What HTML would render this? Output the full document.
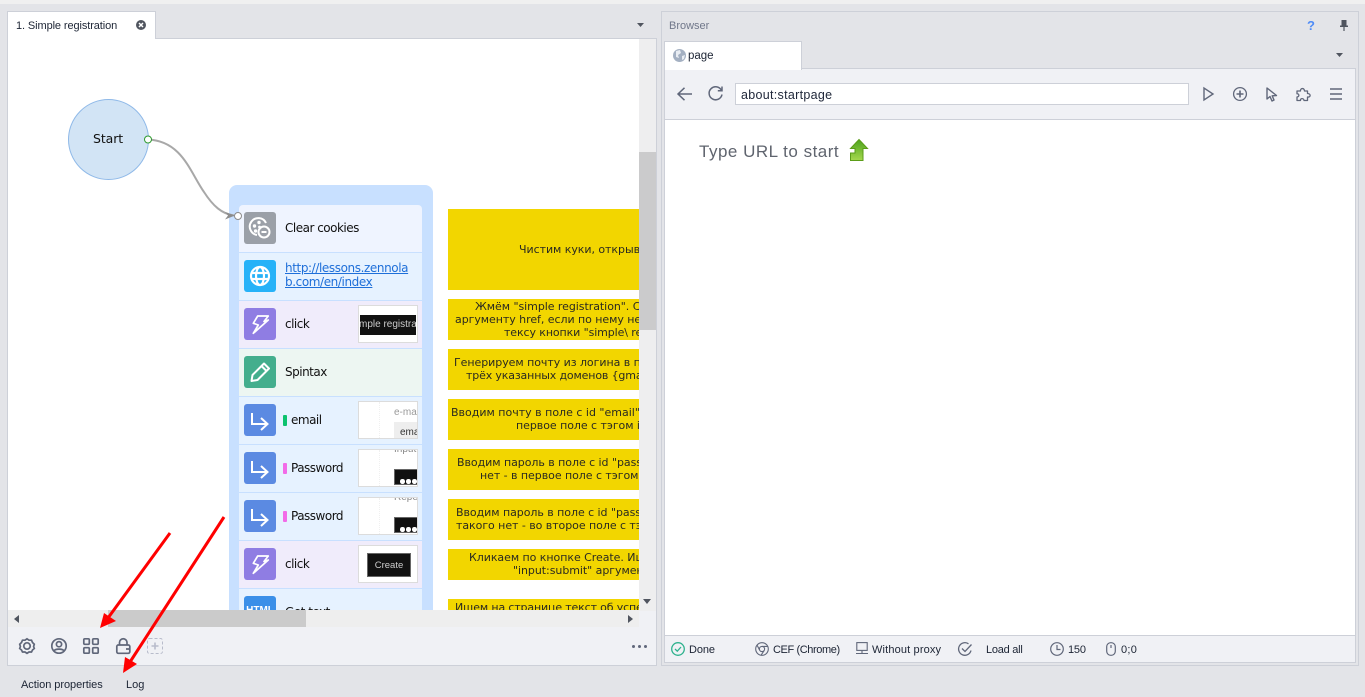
<!DOCTYPE html>
<html><head><meta charset="utf-8"><style>
html,body{margin:0;padding:0;width:1365px;height:697px;overflow:hidden;background:#e3e4e8}
body{position:relative;font-family:"Liberation Sans",sans-serif;font-size:11px;color:#1c2434}
.a,.t,.n{position:absolute}
.t{white-space:nowrap;line-height:14px}
.row{position:absolute;left:231px;width:183px;height:47px}
.ic{position:absolute;left:5px;top:7px;width:32px;height:32px;border-radius:3px}
.ic svg{display:block}
.rt{position:absolute;left:46px;top:15px;font-family:"DejaVu Sans",sans-serif;font-size:12px;line-height:16px;white-space:nowrap;color:#111;letter-spacing:-.5px}
.bar{position:absolute;left:44px;top:18px;width:4px;height:11px;border-radius:1px}
.th{position:absolute;left:119px;top:4px;width:58px;height:36px;border:1px solid #dcdcdc;background:#fff;overflow:hidden}
.dl{position:absolute;left:20px;top:0;height:36px;border-left:1px dotted #f0f0f0}
.n{left:440px;width:200px;background:#f2d600}
.nt{position:absolute;white-space:nowrap;font-family:"DejaVu Sans",sans-serif;font-size:11px;line-height:13px;color:#2a2a20;letter-spacing:-.05px}
svg{position:absolute;overflow:visible}
</style></head><body>
<div class="a" style="left:0;top:0;width:1365px;height:4px;background:#f0f0f0"></div>

<!-- left panel -->
<div class="a" style="left:7px;top:38px;width:650px;height:628px;background:#f0f1f5;border:1px solid #cdd0d8;box-sizing:border-box"></div>
<div class="a" style="left:7px;top:11px;width:149px;height:29px;background:#fff;border:1px solid #cdd0d8;border-bottom:0;box-sizing:border-box"></div>
<div class="t" style="left:16px;top:19px;font-size:11px;letter-spacing:-.1px">1. Simple registration</div>
<svg style="left:136px;top:20px" width="10" height="10"><circle cx="5" cy="5" r="5" fill="#50555f"/><path d="M3 3L7 7M7 3L3 7" stroke="#fff" stroke-width="1.5"/></svg>
<svg style="left:637px;top:23px" width="7" height="4"><path d="M0 0H7L3.5 4Z" fill="#50555f"/></svg>

<!-- canvas -->
<div class="a" style="left:8px;top:39px;width:631px;height:572px;background:#fff;overflow:hidden">
 <div style="position:absolute;left:-8px;top:-39px;width:700px;height:700px">
  <div class="a" style="left:229px;top:185px;width:204px;height:480px;background:#c8e0ff;border-radius:8px"></div>

  <svg style="left:0;top:0" width="300" height="300">
   <circle cx="108.500" cy="139.500" r="40" fill="#d2e4f5" stroke="#8fb9e8" stroke-width="1"/>
   <path d="M148 139.500C182 141 190 172 204 192C213 206 222 214 234 215.500" fill="none" stroke="#a8a8a8" stroke-width="2"/>
  </svg>
  <div class="t" style="left:93px;top:132px;font-family:'DejaVu Sans',sans-serif;font-size:12.500px;color:#111;letter-spacing:-.1px">Start</div>

  <div class="row" style="left:239px;top:205px;background:#eff4ff;border-radius:4px 4px 0 0">
   <div class="ic" style="background:#9ba0a8"><svg width="32" height="32" fill="none" stroke="#fff" stroke-width="2"><path d="M22 11A8.500 8.500 0 1 0 13 23"/><circle cx="20" cy="20" r="5.500"/><path d="M17.500 20H22.500"/><g fill="#fff" stroke="none"><circle cx="10.500" cy="14" r="1.700"/><circle cx="15" cy="10.500" r="1.700"/><circle cx="11.500" cy="19" r="1.700"/><circle cx="15.500" cy="15" r="1.400"/></g></svg></div>
   <div class="rt">Clear cookies</div>
  </div>
  <div class="row" style="left:239px;top:253px;background:#e6f2ff">
   <div class="ic" style="background:#26b2f8"><svg width="32" height="32" fill="none" stroke="#fff" stroke-width="2.200"><circle cx="16" cy="16" r="9"/><ellipse cx="16" cy="16" rx="4" ry="9"/><path d="M7.500 13H24.500M7.500 19H24.500"/></svg></div>
   <div class="rt" style="top:8px;line-height:14px;color:#1e6fd9;text-decoration:underline;letter-spacing:-.4px">http://lessons.zennola<br>b.com/en/index</div>
  </div>
  <div class="row" style="left:239px;top:301px;background:#f0ecfb">
   <div class="ic" style="background:#8f7de3"><svg width="32" height="32" fill="none" stroke="#fff" stroke-width="1.700" stroke-linejoin="round"><path d="M13.700 8H24.300L20 13.500L24.300 12L9.300 25.300L14.300 17L9.300 15.300Z"/></svg></div>
   <div class="rt">click</div>
   <div class="th"><div class="a" style="left:1px;top:9px;width:56px;height:20px;background:#111;color:#ccc;font-size:10px;line-height:20px;white-space:nowrap;overflow:hidden;text-indent:-1px">mple registration</div></div>
  </div>
  <div class="row" style="left:239px;top:349px;background:#edf6f2">
   <div class="ic" style="background:#44ae8d"><svg width="32" height="32" fill="none" stroke="#fff" stroke-width="2" stroke-linejoin="round"><path d="M7.500 25L8.500 19L20 7.500L25 12.500L13.500 24ZM17.500 10L22.500 15"/></svg></div>
   <div class="rt">Spintax</div>
  </div>
  <div class="row" style="left:239px;top:397px;background:#e6f2ff">
   <div class="ic" style="background:#5b8ae2"><svg width="32" height="32" fill="none" stroke="#fff" stroke-width="2"><path d="M8 9V20H23M17 14L23.500 20L17 26"/></svg></div>
   <div class="bar" style="background:#0cc26e"></div><div class="rt" style="left:52px">email</div>
   <div class="th"><div class="dl"></div><div class="a" style="left:35px;top:5px;color:#999;font-size:10px;line-height:12px;white-space:nowrap">e-mail</div><div class="a" style="left:35px;top:20px;width:30px;height:16px;background:#eee"></div><div class="a" style="left:41px;top:25px;color:#333;font-size:10px;line-height:12px;white-space:nowrap">email</div></div>
  </div>
  <div class="row" style="left:239px;top:445px;background:#e6f2ff">
   <div class="ic" style="background:#5b8ae2"><svg width="32" height="32" fill="none" stroke="#fff" stroke-width="2"><path d="M8 9V20H23M17 14L23.500 20L17 26"/></svg></div>
   <div class="bar" style="background:#f26be8"></div><div class="rt" style="left:52px">Password</div>
   <div class="th"><div class="dl"></div><div class="a" style="left:35px;top:-6px;color:#888;font-size:10px;line-height:12px">Input</div><div class="a" style="left:35px;top:19px;width:30px;height:16px;background:#111;border:1px solid #666;box-sizing:border-box"></div><div class="a" style="left:41px;top:29px;width:4.500px;height:4.500px;border-radius:50%;background:#fff;box-shadow:6px 0 #fff,12px 0 #fff"></div></div>
  </div>
  <div class="row" style="left:239px;top:493px;background:#e6f2ff">
   <div class="ic" style="background:#5b8ae2"><svg width="32" height="32" fill="none" stroke="#fff" stroke-width="2"><path d="M8 9V20H23M17 14L23.500 20L17 26"/></svg></div>
   <div class="bar" style="background:#f26be8"></div><div class="rt" style="left:52px">Password</div>
   <div class="th"><div class="dl"></div><div class="a" style="left:35px;top:-6px;color:#888;font-size:10px;line-height:12px">Repeat</div><div class="a" style="left:35px;top:19px;width:30px;height:16px;background:#111;border:1px solid #666;box-sizing:border-box"></div><div class="a" style="left:41px;top:29px;width:4.500px;height:4.500px;border-radius:50%;background:#fff;box-shadow:6px 0 #fff,12px 0 #fff"></div></div>
  </div>
  <div class="row" style="left:239px;top:541px;background:#f0ecfb">
   <div class="ic" style="background:#8f7de3"><svg width="32" height="32" fill="none" stroke="#fff" stroke-width="1.700" stroke-linejoin="round"><path d="M13.700 8H24.300L20 13.500L24.300 12L9.300 25.300L14.300 17L9.300 15.300Z"/></svg></div>
   <div class="rt">click</div>
   <div class="th"><div class="a" style="left:8px;top:7px;width:44px;height:24px;background:#111;border:1px solid #666;box-sizing:border-box;color:#ccc;font-size:9.500px;line-height:23px;text-align:center">Create</div></div>
  </div>
  <div class="row" style="left:239px;top:589px;background:#e6f2ff">
   <div class="ic" style="background:#3a8fe8;color:#fff;font-size:10px;font-weight:bold;text-align:center;line-height:30px">HTML</div>
   <div class="rt">Get text</div>
  </div>

  <div class="n" style="left:448px;top:209px;height:81px"></div>
  <div class="n" style="left:448px;top:299px;height:41px"></div>
  <div class="n" style="left:448px;top:349px;height:41px"></div>
  <div class="n" style="left:448px;top:399px;height:41px"></div>
  <div class="n" style="left:448px;top:449px;height:41px"></div>
  <div class="n" style="left:448px;top:499px;height:41px"></div>
  <div class="n" style="left:448px;top:549px;height:31px"></div>
  <div class="n" style="left:448px;top:599px;height:41px"></div>
  <div class="nt" style="left:519px;top:243px">Чистим куки, открываем</div>
  <div class="nt" style="left:475px;top:300px">Жмём "simple registration". Сначала</div>
  <div class="nt" style="left:455px;top:313px">аргументу href, если по нему нет</div>
  <div class="nt" style="left:504px;top:326px;letter-spacing:-.1px">тексу кнопки "simple\ registration"</div>
  <div class="nt" style="left:454px;top:356px">Генерируем почту из логина в почту</div>
  <div class="nt" style="left:466px;top:369px;letter-spacing:-.15px">трёх указанных доменов {gmail</div>
  <div class="nt" style="left:451px;top:406px;letter-spacing:0">Вводим почту в поле с id "email"</div>
  <div class="nt" style="left:516px;top:419px">первое поле с тэгом input</div>
  <div class="nt" style="left:457px;top:456px">Вводим пароль в поле с id "password"</div>
  <div class="nt" style="left:480px;top:469px">нет - в первое поле с тэгом</div>
  <div class="nt" style="left:456px;top:506px">Вводим пароль в поле с id "password"</div>
  <div class="nt" style="left:456px;top:519px">такого нет - во второе поле с тэгом</div>
  <div class="nt" style="left:469px;top:551px">Кликаем по кнопке Create. Ищем</div>
  <div class="nt" style="left:513px;top:564px">"input:submit" аргумент</div>
  <div class="nt" style="left:455px;top:601px;letter-spacing:-.15px">Ищем на странице текст об успехе</div>

  <svg style="left:0;top:0" width="300" height="300">
   <path d="M225 212L235 215.500L225 219.500L228 215.500Z" fill="#8c8c8c"/>
   <circle cx="238" cy="216" r="3.500" fill="#fff" stroke="#8c8c8c"/>
   <circle cx="148" cy="139.500" r="3.500" fill="#fff" stroke="#2f9a2f" stroke-width="1"/>
  </svg>
 </div>
</div>

<!-- v scrollbar -->
<div class="a" style="left:639px;top:39px;width:17px;height:572px;background:#eeeeef"></div>
<div class="a" style="left:639px;top:152px;width:17px;height:178px;background:#cbcbcc"></div>
<svg style="left:643px;top:599px" width="8" height="5"><path d="M0 0H8L4 5Z" fill="#50555f"/></svg>
<!-- h scrollbar -->
<div class="a" style="left:8px;top:610px;width:631px;height:17px;background:#eeeeee"></div>
<div class="a" style="left:108px;top:610px;width:198px;height:17px;background:#cbcbcb"></div>
<svg style="left:14px;top:615px" width="5" height="8"><path d="M5 0V8L0 4Z" fill="#50555f"/></svg>
<svg style="left:628px;top:615px" width="5" height="8"><path d="M0 0V8L5 4Z" fill="#50555f"/></svg>

<!-- bottom toolbar icons -->
<svg style="left:19px;top:638px" width="16" height="16" fill="none" stroke="#60677a" stroke-width="1.700"><path d="M8 .8L10 2.200L12.500 2.200L13.500 4.500L15.300 6.200L14.600 8.500L15.300 10.500L13.500 12L12.500 14L10 14L8 15.300L6 14L3.500 14L2.500 12L.7 10.500L1.400 8.500L.7 6.200L2.500 4.500L3.500 2.200L6 2.200Z"/><circle cx="8" cy="8" r="3.200"/></svg>
<svg style="left:51px;top:638px" width="16" height="16" fill="none" stroke="#60677a" stroke-width="1.700"><circle cx="8" cy="8" r="7.200"/><circle cx="8" cy="6.200" r="2.600"/><path d="M3 13C4 10.500 12 10.500 13 13"/></svg>
<svg style="left:83px;top:638px" width="16" height="16" fill="none" stroke="#60677a" stroke-width="1.700"><rect x=".8" y=".8" width="5.500" height="5.500" rx="1"/><rect x="9.700" y=".8" width="5.500" height="5.500" rx="1"/><rect x=".8" y="9.700" width="5.500" height="5.500" rx="1"/><rect x="9.700" y="9.700" width="5.500" height="5.500" rx="1"/></svg>
<svg style="left:116px;top:638px" width="15" height="16" fill="none" stroke="#60677a" stroke-width="1.700"><rect x=".8" y="7" width="13" height="8.300" rx="1.500"/><path d="M3.500 7V4.500A3.750 3.750 0 0 1 11 4.500V7M10 11H14"/></svg>
<svg style="left:147px;top:638px" width="16" height="16" fill="none" stroke="#b8bccb" stroke-width="1"><rect x=".5" y=".5" width="15" height="15" rx="2" stroke-dasharray="3 2"/><path d="M8 4.500V11.500M4.500 8H11.500" stroke-width="1.600"/></svg>
<div class="a" style="left:632px;top:645px;width:3px;height:3px;border-radius:50%;background:#60677a;box-shadow:6px 0 #60677a,12px 0 #60677a"></div>

<div class="t" style="left:21px;top:678px;font-size:11px;letter-spacing:-.05px">Action properties</div>
<div class="t" style="left:126px;top:678px;font-size:11px">Log</div>

<!-- right panel -->
<div class="a" style="left:661px;top:11px;width:698px;height:655px;border:1px solid #cdd0d8;box-sizing:border-box"></div>
<div class="t" style="left:669px;top:19px;font-size:11px;color:#70778a">Browser</div>
<div class="t" style="left:1307px;top:19px;font-size:13px;font-weight:bold;color:#4f8cf7">?</div>
<svg style="left:1340px;top:20px" width="8" height="11" fill="#50555f"><path d="M1.500 0H6.500V5.500H8V7H4.600V11H3.400V7H0V5.500H1.500Z"/></svg>
<svg style="left:1336px;top:53px" width="7" height="4"><path d="M0 0H7L3.500 4Z" fill="#50555f"/></svg>

<!-- inner frame -->
<div class="a" style="left:664px;top:68px;width:692px;height:595px;background:#fff;border:1px solid #cdd0d8;box-sizing:border-box"></div>
<div class="a" style="left:665px;top:69px;width:690px;height:51px;background:#f0f1f5;border-bottom:1px solid #cdd0d8;box-sizing:border-box"></div>
<div class="a" style="left:664px;top:41px;width:138px;height:29px;background:#fff;border:1px solid #cdd0d8;border-bottom:0;box-sizing:border-box"></div>
<svg style="left:673px;top:49px" width="13" height="13"><circle cx="6.500" cy="6.500" r="6.500" fill="#a4b0c2"/><path d="M3 2L7 1L8 4L5 6L6 9L3 8ZM9 7L12 6L11 10L9 11Z" fill="#e9edf3"/></svg>
<div class="t" style="left:688px;top:49px;font-size:11.500px">page</div>

<svg style="left:677px;top:87px" width="15" height="14" fill="none" stroke="#60677a" stroke-width="1.500"><path d="M15 7H1M7.500 .8L1 7L7.500 13.200"/></svg>
<svg style="left:708px;top:86px" width="15" height="15" fill="none" stroke="#60677a" stroke-width="1.500"><path d="M13.500 4.500A6.500 6.500 0 1 0 14 8.500M14 .5V4.800H9.800"/></svg>
<div class="a" style="left:735px;top:83px;width:454px;height:22px;background:#fff;border:1px solid #cdd0d8;box-sizing:border-box"></div>
<div class="t" style="left:741px;top:88px;font-size:12.500px;color:#20283a;letter-spacing:.3px">about:startpage</div>
<svg style="left:1203px;top:87px" width="11" height="14" fill="none" stroke="#60677a" stroke-width="1.400"><path d="M1 1V13L10 7Z"/></svg>
<svg style="left:1233px;top:87px" width="14" height="14" fill="none" stroke="#60677a" stroke-width="1.300"><circle cx="7" cy="7" r="6.400"/><path d="M7 3.500V10.500M3.500 7H10.500" stroke-width="1.600"/></svg>
<svg style="left:1266px;top:87px" width="12" height="15" fill="none" stroke="#60677a" stroke-width="1.400" stroke-linejoin="round"><path d="M1 1V12L4 9.500L6 14L8 13L6.200 8.800L10.500 8.500Z"/></svg>
<svg style="left:1296px;top:87px" width="15" height="14" fill="none" stroke="#60677a" stroke-width="1.300" stroke-linejoin="round"><path d="M1 4H4.500C4 1 8.500 .5 8.500 4H11.500V6.500C15 6.500 15 10.500 11.500 10V13.500H8C8 11 4 11 4.500 13.500H1V10C3.500 10 3.500 6.500 1 6.800Z"/></svg>
<svg style="left:1330px;top:88px" width="12" height="12" fill="none" stroke="#60677a" stroke-width="1.400"><path d="M0 1H12M0 6H12M0 11H12"/></svg>

<div class="t" style="left:699px;top:143px;font-size:17px;line-height:18px;color:#5f646e;letter-spacing:.5px">Type URL to start</div>
<svg style="left:850px;top:139px" width="18" height="22"><defs><linearGradient id="g" x1="0" y1="0" x2="0" y2="1"><stop offset="0" stop-color="#4da31e"/><stop offset="1" stop-color="#a5d84e"/></linearGradient></defs><path d="M9 .5L17.500 9.500H13V21.500H.5V14H5V9.500H.5Z" fill="url(#g)" stroke="#5b9d18" stroke-width="1"/></svg>

<!-- status -->
<div class="a" style="left:665px;top:635px;width:690px;height:27px;background:#f0f1f5;border-top:1px solid #cdd0d8;box-sizing:border-box"></div>
<svg style="left:671px;top:642px" width="14" height="14" fill="none" stroke="#2fb28e" stroke-width="1.300"><circle cx="7" cy="7" r="6.300"/><path d="M4 7L6.300 9.200L10 5"/></svg>
<div class="t" style="left:689px;top:643px;font-size:11px;letter-spacing:-.1px">Done</div>
<svg style="left:755px;top:642px" width="14" height="14" fill="none" stroke="#60677a" stroke-width="1.100"><circle cx="7" cy="7" r="6.300"/><circle cx="7" cy="7" r="2.600"/><path d="M7 4.400H13M4.700 8.300L2 3M9.300 8.300L6 13.300"/></svg>
<div class="t" style="left:773px;top:643px;font-size:11px;letter-spacing:-.4px">CEF (Chrome)</div>
<svg style="left:856px;top:642px" width="12" height="13" fill="none" stroke="#60677a" stroke-width="1.100"><rect x=".8" y=".6" width="10.400" height="7.800"/><path d="M6 8.500V11.500M0 11.500H12"/></svg>
<div class="t" style="left:872px;top:643px;font-size:11px;letter-spacing:.15px">Without proxy</div>
<svg style="left:958px;top:642px" width="15" height="14" fill="none" stroke="#60677a" stroke-width="1.300"><path d="M13 8.500A6.300 6.300 0 1 1 10.500 1.800M4 6.500L7 9.500L13.500 2.500"/></svg>
<div class="t" style="left:986px;top:643px;font-size:11px;letter-spacing:-.25px">Load all</div>
<svg style="left:1050px;top:642px" width="14" height="14" fill="none" stroke="#60677a" stroke-width="1.200"><circle cx="7" cy="7" r="6.300"/><path d="M7 3V7.500H10.500"/></svg>
<div class="t" style="left:1068px;top:643px;font-size:11px;letter-spacing:-.2px">150</div>
<svg style="left:1106px;top:642px" width="10" height="14" fill="none" stroke="#60677a" stroke-width="1.200"><rect x=".7" y=".7" width="8.600" height="12.600" rx="4"/><path d="M5 3V6"/></svg>
<div class="t" style="left:1121px;top:643px;font-size:11px;letter-spacing:.3px">0;0</div>

<!-- red arrows -->
<svg style="left:0;top:0" width="300" height="697">
 <path d="M170 533L108 618" stroke="#f00" stroke-width="3" fill="none"/>
 <path d="M100 628L104 613L116 621Z" fill="#f00"/>
 <path d="M224 517L130 662" stroke="#f00" stroke-width="3" fill="none"/>
 <path d="M123 673L125 657L137 664Z" fill="#f00"/>
</svg>
</body></html>
